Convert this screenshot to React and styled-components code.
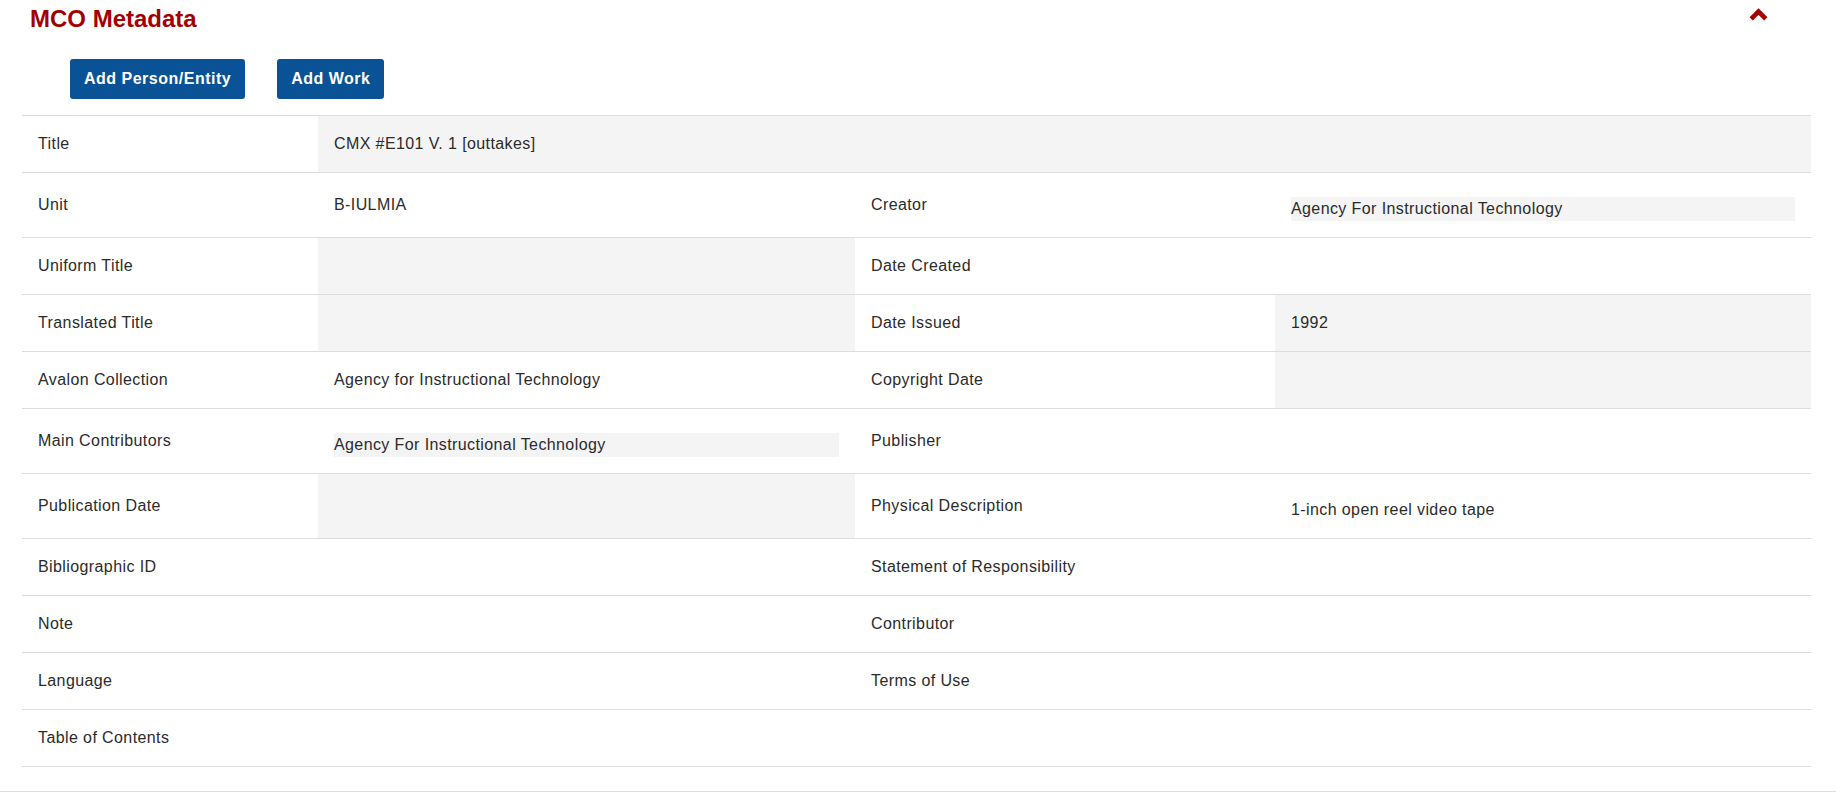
import styled, { createGlobalStyle } from "styled-components";

const GlobalStyle = createGlobalStyle`
  body {
    margin: 0;
    background: #fff;
    font-family: "Liberation Sans", Arial, sans-serif;
    color: #2b2b2b;
  }
`;

const Panel = styled.section`
  border-bottom: 1px solid #dddddd;
  padding-bottom: 24px;
`;

const Header = styled.header`
  display: flex;
  justify-content: space-between;
  align-items: flex-start;
  padding: 5px 68px 0 30px;
`;

const Heading = styled.h2`
  margin: 0;
  font-size: 24px;
  line-height: 28px;
  font-weight: bold;
  color: #a30000;
`;

const Toggle = styled.button`
  border: 0;
  background: none;
  padding: 0;
  margin-top: 2px;
  cursor: pointer;
  display: flex;
`;

const Actions = styled.div`
  display: flex;
  gap: 32px;
  padding-left: 70px;
  margin: 26px 0 16px;
`;

const Button = styled.button`
  background: #0a5296;
  color: #fff;
  border: 0;
  border-radius: 3px;
  padding: 10px 14px;
  font-family: "Liberation Sans", Arial, sans-serif;
  font-weight: bold;
  font-size: 16px;
  line-height: 20px;
  letter-spacing: 0.5px;
  cursor: pointer;
`;

const Table = styled.div`
  margin: 0 25px 0 22px;
  border-bottom: 1px solid #dddddd;
`;

const Row = styled.div`
  display: grid;
  grid-template-columns: 296px 537px 420px 1fr;
  border-top: 1px solid #dddddd;
`;

const Cell = styled.div`
  display: flex;
  align-items: center;
  padding: 16px;
  font-size: 16px;
  line-height: 24px;
  letter-spacing: 0.4px;
  background: ${(p) => (p.$shaded ? "#f4f4f4" : "transparent")};
  grid-column: ${(p) => (p.$wide ? "2 / -1" : "auto")};
`;

const Entry = styled.div`
  flex: 1;
  margin-top: 8px;
  background: ${(p) => (p.$shaded ? "#f4f4f4" : "transparent")};
`;

function Value({ field }) {
  if (!field) return <Cell />;
  return (
    <Cell $shaded={field.shaded} $wide={field.wide}>
      {field.entry ? (
        <Entry $shaded={field.entry === "box"}>{field.text}</Entry>
      ) : (
        field.text
      )}
    </Cell>
  );
}

const rows = [
  ["Title", { text: "CMX #E101 V. 1 [outtakes]", shaded: true, wide: true }],
  [
    "Unit",
    { text: "B-IULMIA" },
    "Creator",
    { text: "Agency For Instructional Technology", entry: "box" },
  ],
  ["Uniform Title", { shaded: true }, "Date Created", null],
  ["Translated Title", { shaded: true }, "Date Issued", { text: "1992", shaded: true }],
  [
    "Avalon Collection",
    { text: "Agency for Instructional Technology" },
    "Copyright Date",
    { shaded: true },
  ],
  [
    "Main Contributors",
    { text: "Agency For Instructional Technology", entry: "box" },
    "Publisher",
    null,
  ],
  [
    "Publication Date",
    { shaded: true },
    "Physical Description",
    { text: "1-inch open reel video tape", entry: "plain" },
  ],
  ["Bibliographic ID", null, "Statement of Responsibility", null],
  ["Note", null, "Contributor", null],
  ["Language", null, "Terms of Use", null],
  ["Table of Contents", null],
];

function ChevronUp() {
  return (
    <svg width="19" height="14" viewBox="0 0 19 14">
      <polyline
        points="2.2,11.8 9.5,4.5 16.8,11.8"
        fill="none"
        stroke="#a30000"
        strokeWidth="4.6"
        strokeLinejoin="miter"
      />
    </svg>
  );
}

export default function App() {
  return (
    <>
      <GlobalStyle />
      <Panel>
        <Header>
          <Heading>MCO Metadata</Heading>
          <Toggle aria-label="Collapse">
            <ChevronUp />
          </Toggle>
        </Header>
        <Actions>
          <Button>Add Person/Entity</Button>
          <Button>Add Work</Button>
        </Actions>
        <Table>
          {rows.map(([label, value, label2, value2]) => (
            <Row key={label}>
              <Cell>{label}</Cell>
              <Value field={value} />
              {label2 && (
                <>
                  <Cell>{label2}</Cell>
                  <Value field={value2} />
                </>
              )}
            </Row>
          ))}
        </Table>
      </Panel>
    </>
  );
}
